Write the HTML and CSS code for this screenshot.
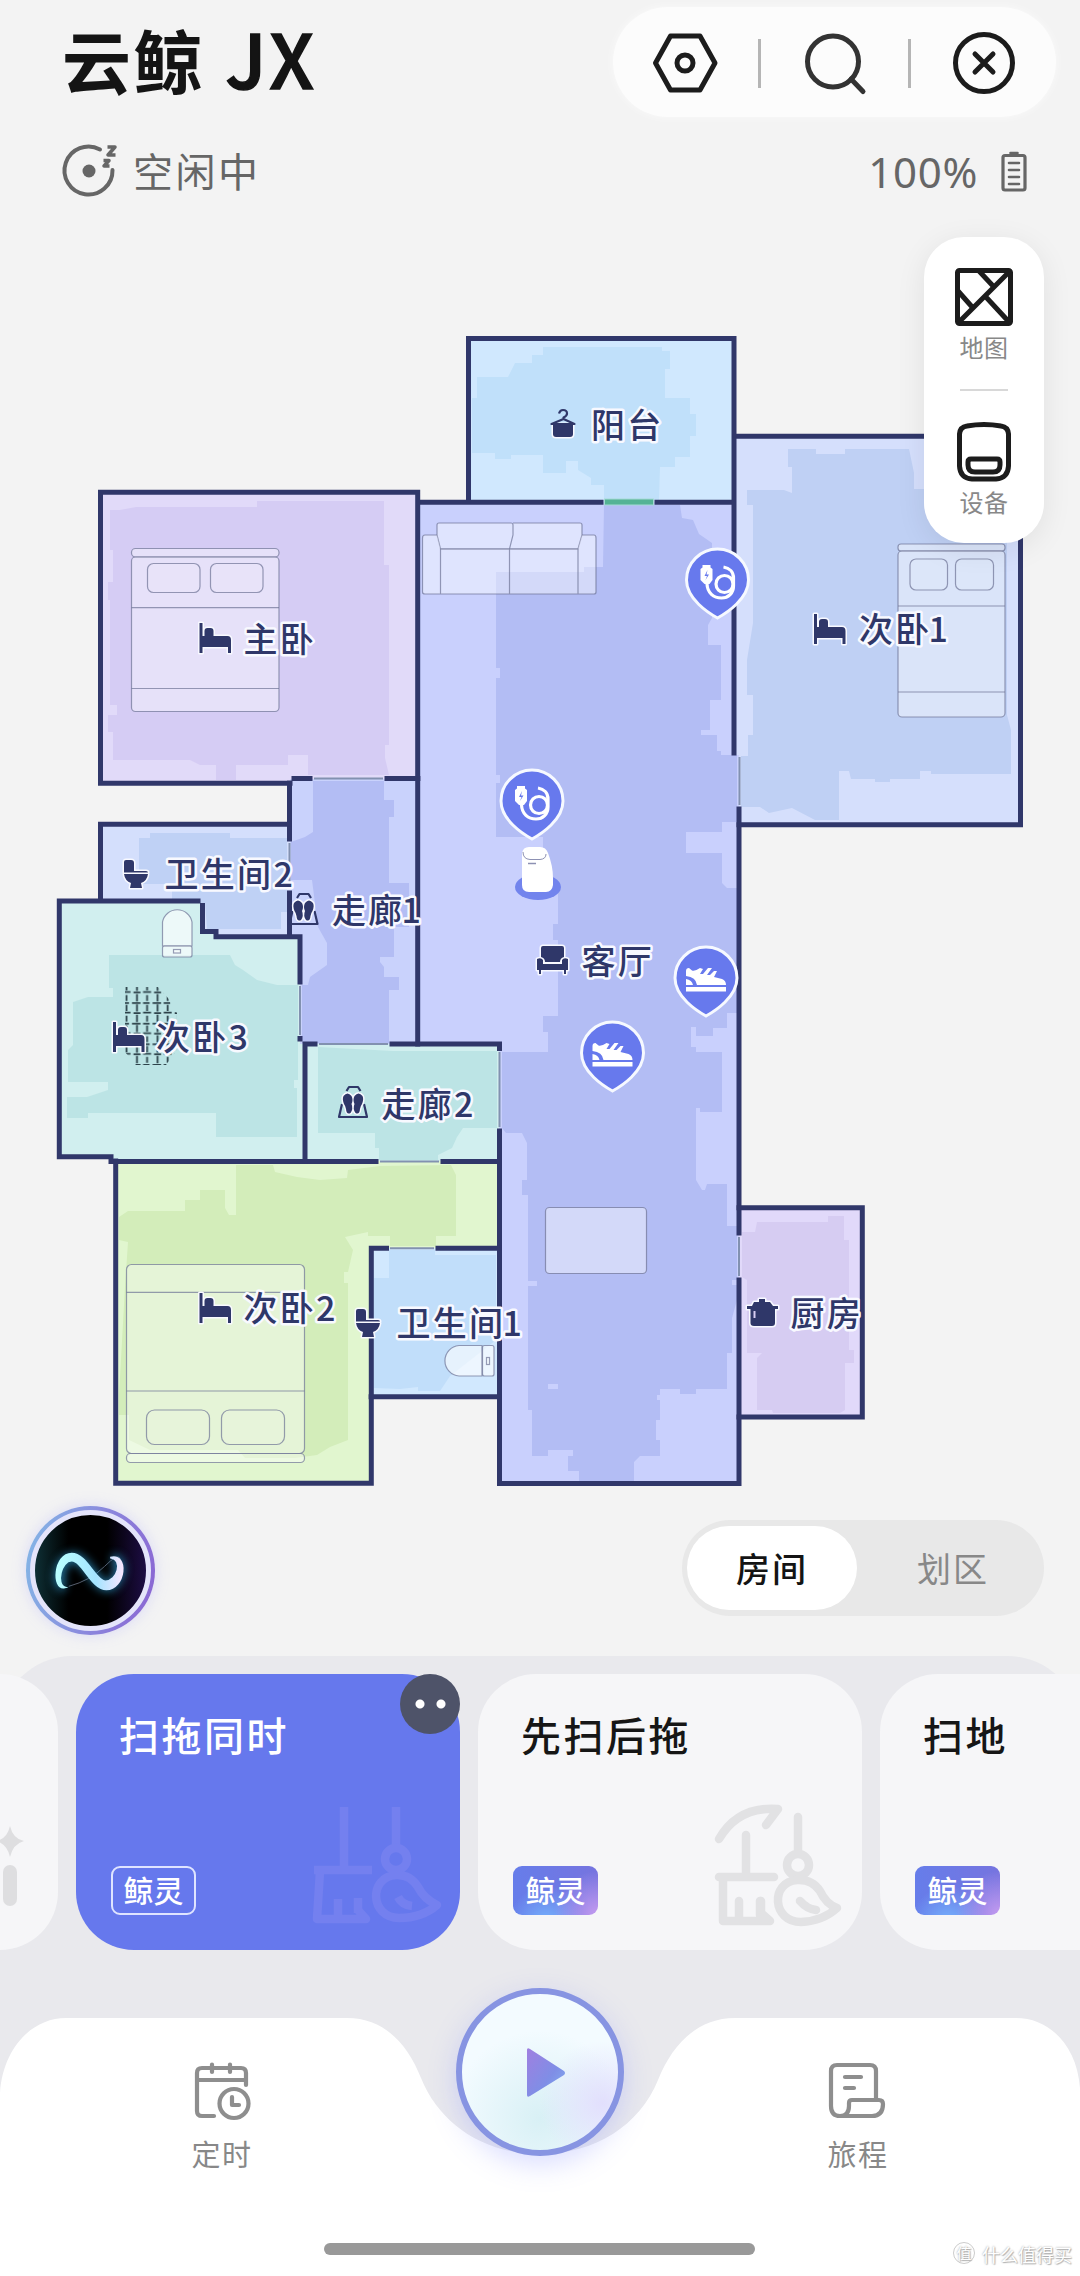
FILE: index.html
```html
<!DOCTYPE html>
<html lang="zh-CN">
<head>
<meta charset="utf-8" />
<meta name="viewport" content="width=1080" />
<title>云鲸 JX</title>
<link rel="stylesheet" href="styles.css">
</head>

<body>
<div class="page">
	<div class="header">
		<h1>云鲸 <span>JX</span></h1>
		<div class="tools">
			<svg class="tool" width="66" height="66" viewBox="0 0 66 66"><path d="M18.500 6H48L63 33L48 60H18.500L3.500 33Z"/><circle cx="33" cy="33" r="8"/></svg>
			<i></i>
			<svg class="tool search" width="66" height="66" viewBox="0 0 66 66"><circle cx="31" cy="31.500" r="25.500"/><path d="M49 49L61 61.500"/></svg>
			<i></i>
			<svg class="tool" width="66" height="66" viewBox="0 0 66 66"><circle cx="33" cy="33" r="28.500"/><path d="M24 24L42 42M42 24L24 42"/></svg>
		</div>
	</div>

	<div class="status">
		<svg width="60" height="60" viewBox="0 0 60 60"><path d="M39 12.500A24 24 0 1 0 51.500 33" fill="none" stroke="#666" stroke-width="4" stroke-linecap="round"/><circle cx="28" cy="34" r="6.500" fill="#666"/><path d="M46.500 10H54L47 18H54.500M42.500 23.500H48L43 29H48.500" fill="none" stroke="#666" stroke-width="3.500" stroke-linejoin="round"/></svg>
		<span class="state">空闲中</span>
		<span class="percent">100%</span>
		<svg width="26" height="42" viewBox="0 0 26 42"><rect x="2" y="4.500" width="22" height="34.500" rx="2" fill="none" stroke="#666" stroke-width="3.200"/><path d="M9.500 2H16.500M8 12H18M8 19H18M8 26H18M8 33H18" stroke="#666" stroke-width="2.600" stroke-linecap="round"/></svg>
	</div>

	<div class="stage">
	<svg class="map" width="1080" height="1270" viewBox="0 230 1080 1270">
		<defs>
			<path id="bed" d="M0 0H3V13H5V8Q5 5 8 5H11Q14 5 14 8V13H28Q31.500 13 31.500 17V30H28.500V24H3V30H0Z"/>
			<path id="toilet" d="M2 0H7Q10 0 10 3V11H22Q24 11 24 12.500H0V2Q0 0 2 0ZM0 14H24Q23 21 17 23L18 28H6L7 23Q1 21 0 14Z"/>
			<g id="feet">
				<path class="line" d="M9 5L11.500 1H20.500L23 5M4.500 18L1.500 31H29.500L26.500 18"/>
				<path d="M6 9Q10 4 14 9Q16 13 14 17Q16 22 13 26Q9 28 8.500 22Q8 19 6.500 17Q4.500 12 6 9ZM25 9Q21 4 17 9Q15 13 17 17Q15 22 18 26Q22 28 22.500 22Q23 19 24.500 17Q26.500 12 25 9Z" transform="translate(0 1)"/>
			</g>
			<g id="pin">
				<path d="M0 37C-9 32 -31 18 -31 -1A31 31 0 0 1 31 -1C31 18 9 32 0 37Z" fill="#6779ed" stroke="#f6f9ff" stroke-width="3"/>
			</g>
			<g id="cable">
				<use href="#pin"/>
				<path d="M-15 -16H-7V-13.500L-5 -12V-1L-8 3H-13L-17 -1V-12L-15 -13.500Z" fill="#fff"/>
				<path d="M-10 -11L-13 -5H-10.500L-12 -1L-8.500 -6.500H-11Z" fill="#6779ed"/>
				<path d="M-10.500 3C-10 12 -4 17 4 17C11 17 16 12 16 5V-3C16 -9 12 -13 6 -14" fill="none" stroke="#fff" stroke-width="3.200"/>
				<circle cx="7" cy="3" r="8.500" fill="none" stroke="#fff" stroke-width="3.200"/>
			</g>
			<g id="shoe">
				<use href="#pin"/>
				<path d="M-20 -8Q-20 -11 -17 -11L-14 -8.500Q-11 -7.500 -6 -11L-3 -10L-6 -5H-3L2 -11H6L1 -4H4L8 -8H11L8 -2L16 0Q20 1.500 20 6H-9Q-10 -2 -20 -3ZM-20 0Q-14 1 -13 6H-20Z" fill="#fff"/>
				<rect x="-20" y="8" width="40" height="4.500" fill="#fff"/>
			</g>
			<pattern id="rug" width="20.600" height="20.600" patternUnits="userSpaceOnUse" x="121" y="986.500">
				<path d="M1.500 5.500H9.500M12.500 6H19.500M1.500 16.500H8M11 16.500H19.500M5.500 8.500V14.500M5.500 18.500V20.600M5.500 0V4M16 7.500V15M16 0V4.500M16 18V20.600" stroke="#2c4149" stroke-width="1.800" fill="none"/>
			</pattern>
		</defs>

		<!-- 房间底色 -->
		<path fill="#d0e8fe" d="M468 338H734V502H468Z"/>
		<path fill="#c9d0fd" d="M418 502H734V755H739V1483H499V1044H418Z"/>
		<path fill="#e1daf9" d="M100 492H418V779H290V783H100Z"/>
		<path fill="#d5dffc" d="M734 436H1020V825H739V755H734Z"/>
		<path fill="#d4dffc" d="M100 824H290V937H216L202 931V901H100Z"/>
		<path fill="#c9d2fc" d="M290 779H418V1044H300V937H290Z"/>
		<path fill="#d1efef" d="M59 901H202V932H216V937H300V1044H305V1161H113V1157H59Z"/>
		<path fill="#d1efef" d="M305 1044H499V1161H305Z"/>
		<path fill="#e1f6cf" d="M116 1161H499V1248H371V1483H116Z"/>
		<path fill="#d1e8fe" d="M371 1248H499V1397H371Z"/>
		<path fill="#e1d9fa" d="M739 1208H862V1417H739Z"/>

		<!-- 已清扫区域 -->
		<path fill="#c0e0fa" d="M543 347H662V351H670V369H665V398H690V414H696V436H690V457H675V467H660L659 500H604V485H591V478L578 470V461H566V473H543V455H511V459H495V453H472V398H477V377H508L515 363H532V355H543Z"/>
		<path fill="#b3bdf4" d="M604 505H680L682 518L693 520L699 534L712 543V618L708 625V645H721V700H710V730H701V735H717V751H721V755H737V822H722V832H686V853H722V883L727 888H737V1013H727V1028H713V1036H696V1027H691V1047H696V1052H722V1112H700V1108H696V1180L702 1190H705L707 1184H727V1226H737V1280H732V1285H737V1300L732 1318V1353H727V1389H696V1394H680V1389H660V1395H657V1400H660V1420H656V1440H660V1456H640L634 1462V1481H579V1471H568V1456H532V1410H528V1195H522V1180H527V1143L522 1133H506L502 1128V1052H548V1032H543V1016H558V940H553V924H558V890L543 880V837H496V572H584V567H603Z"/>
		<path fill="#c9d0fd" d="M528 1281h9v5h-9zM548 1384h10v5h-10zM548 1450h25v6h-25zM496 775h4v8h-4zM496 668h4v10h-4z"/>
		<path fill="#d5ccf4" d="M110 510H120L136 507H257V501H384V565H389V745H385V758L389 775H308V755H288V765H236V780H216V765H200L190 760H113V732H108V715H117V705H110V600H108V582H113V550H110Z"/>
		<path fill="#bfd0f4" d="M788 449H816V454H845V449H909L914 473V489H1007V715L1011 730V774H931V771H920V779H890V782H875V779H851L849 771H839V820H815L792 808L769 813L760 807H741V756H748V735H753V695H747V660L753 623V505H747V490H784L792 493V467H788Z"/>
		<path fill="#bfd1f5" d="M150 833H230V838H287V912H281V929H207L205 903H172V884H139V838H150Z"/>
		<path fill="#b3bdf4" d="M313 781H384V800H394V817H389V883H409V927H394V957H380V962L384 967V977H399V990H389V1043H302V985H308L310 977L327 965V943L318 927L312 880H291V842L305 837L313 832Z"/>
		<path fill="#bce4e5" d="M109 955H230L235 965L243 970L257 980L277 985H298V1080H294V1088H297V1137H216V1113H193L88 1113V1118H67V1097H87L108 1090V1082H68V1050L73 1045V1002L88 997H113V988H109Z"/>
		<path fill="#bce4e5" d="M318 1047L393 1051H497V1128H463L457 1137L452 1148L438 1155V1160H379V1148H375V1133H318Z"/>
		<path fill="#d3edba" d="M236 1165H273L275 1172L297 1177L320 1180L347 1178L348 1170L380 1166L451 1165L456 1175V1236H436V1246H390V1236H368V1232L345 1237L353 1250L348 1272H344V1283H348V1440L330 1447L317 1455L295 1458H245L238 1450H150L129 1440V1415H119V1395L125 1287L128 1242L119 1240V1217L128 1211H185V1200H200V1190H225V1208L229 1215H236Z"/>
		<path fill="#c1defa" d="M389 1250H435V1255H496V1340L450 1376L440 1391H418V1387L400 1389L374 1388V1278H389Z"/>
		<path fill="#d6ccf2" d="M757 1222H828V1216H844V1240H849V1350H854V1363H845V1410L840 1413H773L772 1410H757V1358L762 1353H747V1280L742 1277V1232H755Z"/>

		<!-- 家具 -->
		<g class="furniture">
			<rect x="131.500" y="548.500" width="147.500" height="8.500" rx="4"/><rect x="131.500" y="557" width="147.500" height="154.500" rx="4"/><path class="thin" d="M131.500 607.700H279M131.500 688.500H279"/>
			<rect class="thin" x="147.500" y="563.500" width="52.500" height="29" rx="6"/><rect class="thin" x="210.500" y="563.500" width="52.500" height="29" rx="6"/>
			<rect x="898" y="544" width="107" height="7" rx="3"/><rect x="898" y="551" width="107" height="166" rx="4"/><path class="thin" d="M898 606H1005M898 692H1005"/>
			<rect class="thin" x="910" y="559" width="37.500" height="31" rx="6"/><rect class="thin" x="955.500" y="559" width="38" height="31" rx="6"/>
			<rect x="126.500" y="1264.500" width="178" height="189" rx="5"/><rect x="126.500" y="1453.500" width="178" height="9" rx="4"/><path class="thin" d="M126.500 1292.300H304.500M126.500 1391H304.500"/>
			<rect class="thin" x="146.500" y="1410" width="63" height="34.500" rx="8"/><rect class="thin" x="221.500" y="1410" width="63" height="34.500" rx="8"/>
			<path d="M439 523H511Q513 523 513 525V535L509.500 549H440.500L437 535V525Q437 523 439 523ZM513 523H580Q582 523 582 525V535L578 549H509.500"/>
			<path d="M440.500 549V594H425Q422.500 594 422.500 592V538Q422.500 535 425 535H437M440.500 549H509.500V594H440.500ZM509.500 549H578V594H509.500M578 549V594H594Q596 594 596 592V538Q596 535 594 535H582"/>
			<rect x="545.500" y="1207.500" width="101" height="66" rx="4"/>
			<path class="solid" d="M162.500 946V922A15 15 0 0 1 192 922V946Z"/><rect x="162.500" y="946" width="29.500" height="11" rx="2" class="solid"/><rect x="173.500" y="949.500" width="7" height="3.500"/>
			<path class="solid" d="M482 1345.500H459A15.300 15.300 0 0 0 459 1376H482Z"/><rect x="482.500" y="1345.500" width="11.500" height="30.500" rx="2" class="solid"/><rect x="486.500" y="1357.500" width="3" height="7"/>
		</g>
		<path d="M125 987H158L168 998L177 1013V1050L166 1065H136L125 1052Z" fill="url(#rug)"/>

		<!-- 墙体 -->
		<g class="wall">
			<path d="M468.500 502V338.500H734V753M420 502.300H601M657 502.300H734M734 436.300H1020.500V824.700H739"/>
			<path d="M290 783.300H100.500V492.300H417.700V1044M294 778.500H310M387 778.500H418M289.500 783V839M289.500 893V934"/>
			<path d="M100.500 901V824.300H289.500M198 901H59.300V1156.700H111M111 1161.500H376M443 1161.500H499M202.500 905.500V931.500H216V936.700H300V982M300 1038.500V1039"/>
			<path d="M305 1161V1044H315M392 1044H499.500V1048.500M499.500 1131V1483.500H739V1280M739 1233V809"/>
			<path d="M115.700 1161V1483.300H371.300V1248.300H386.500M438 1248.300H499M371 1396.700H499M739 1207.700H862.300V1417H739"/>
		</g>
		<path class="door" d="M739.500 757V805M314 778.500H383M289.500 843V889M300 986V1035M319 1044H388M499.500 1052V1127M380 1161.500H439M390 1248.300H434M739 1237V1276"/>
		<rect x="604.500" y="499" width="49" height="6" fill="#54b395" stroke="#a5d9d5"/>

		<!-- 房间名称 -->
		<g class="label">
			<text x="591" y="438">阳台</text>
			<text x="243.500" y="651.500">主卧</text>
			<text x="859" y="642">次卧<tspan dx="-3">1</tspan></text>
			<text x="164.500" y="887">卫生间2</text>
			<text x="332" y="922.500">走廊<tspan dx="-3">1</tspan></text>
			<text x="156" y="1050">次卧3</text>
			<text x="381.500" y="1117">走廊2</text>
			<text x="243.500" y="1321">次卧2</text>
			<text x="396.500" y="1336">卫生间<tspan dx="-3">1</tspan></text>
			<text x="581.500" y="974">客厅</text>
			<text x="790.500" y="1326">厨房</text>
			<use href="#bed" x="199.500" y="623"/>
			<use href="#bed" x="814" y="614"/>
			<use href="#bed" x="199.500" y="1293"/>
			<use href="#bed" x="113" y="1022"/>
			<use href="#toilet" x="124" y="860"/>
			<use href="#toilet" x="356" y="1309"/>
			<use href="#feet" x="288" y="893"/>
			<use href="#feet" x="337.500" y="1086"/>
			<path d="M553 424H573V434Q573 437 570 437H556Q553 437 553 434Z"/>
			<path class="line" d="M559 413.500Q560 410 563 410Q567 410 567 413.500Q567 416 563.500 417.500V419L551.500 424H574.500L563.500 419"/>
			<path d="M543 946H562Q564 946 564 948V957Q560 958 560 962H545Q545 958 541 957V948Q541 946 543 946ZM537 959Q541 957 543 960V964H562V960Q564 957 568 959V970H566V974H564V970H541V974H539V970H537Z"/>
			<path d="M747 1306H752L754 1302H759V1299H765V1302H770L773 1306H778V1309H775V1323Q775 1326 772 1326H754Q750.500 1326 750.500 1323V1309H747Z"/><path d="M754.500 1311V1318" class="gleam"/>
		</g>

		<!-- 基站 -->
		<ellipse cx="538" cy="887" rx="23" ry="13" fill="#7284ed"/>
		<path d="M522 853Q523 847 529 847H540Q546 847 548 853Q553 866 553 878V885Q552 892 546 892H529Q522 892 522 885Z" fill="#fff"/>
		<path d="M523 852Q523 859 530 859.500H540Q546 859 546 854" fill="none" stroke="#8d91b3" stroke-width="1"/>
		<path d="M528 863.500H536" stroke="#8d91b3" stroke-width="1.500"/>
		<use href="#cable" x="717.500" y="581"/>
		<use href="#cable" x="532" y="802"/>
		<use href="#shoe" x="706" y="979"/>
		<use href="#shoe" x="612.500" y="1054"/>
	</svg>

	<div class="side">
		<svg width="60" height="60" viewBox="0 0 60 60"><rect x="3.500" y="3.500" width="53" height="53" rx="2"/><path d="M56 4L4 56M4 24L19 41M25 4L40 20M31 29L56 56"/></svg>
		<span>地图</span>
		<hr />
		<svg width="60" height="60" viewBox="0 0 60 60"><path d="M13 4Q30 1 47 4Q54 5 54.500 12V44Q54 56 42 57H18Q6 56 5.500 44V12Q6 5 13 4Z"/><path d="M17 37H43Q46 37 46 40V43Q46 50 39 50H21Q14 50 14 43V40Q14 37 17 37Z"/></svg>
		<span>设备</span>
	</div>
	</div>

	<div class="controls">
		<div class="ai">
			<svg width="112" height="112" viewBox="0 0 112 112">
				<defs><linearGradient id="wave" x1="0" x2="1"><stop offset="0" stop-color="#b9ffff"/><stop offset=".6" stop-color="#a5e4ff"/><stop offset="1" stop-color="#f5e6ff"/></linearGradient></defs>
				<path d="M34 72Q56 66 70 52T86 44" fill="none" stroke="#59606e" stroke-width="1"/>
				<path class="glow" d="M30 72C20 72 24 42 39 43C52 44 61 72 73 72C84 72 92 45 78 44"/>
				<path class="wave" d="M30 73C17 76 19 39 37 39C52 39 61 67 71 67C83 67 90 45 76 43C95 38 91 75 72 75C57 75 48 46 37 46C26 46 21 70 30 73Z"/>
			</svg>
		</div>
		<div class="switch">
			<span class="active">房间</span>
			<span>划区</span>
		</div>
	</div>

	<div class="bottom">
		<div class="cards">
			<div class="card">
				<svg class="sparkle" width="40" height="80" viewBox="0 0 40 80"><path d="M24 0Q27 13 38 15Q27 18 24 31Q21 18 10 15Q21 13 24 0Z"/><rect x="17" y="39" width="14" height="41" rx="7"/></svg>
			</div>
			<div class="card active">
				<b>扫拖同时</b>
				<em>鲸灵</em>
				<span class="more"></span>
				<svg class="pic" width="134" height="118" viewBox="0 0 134 118"><path d="M36 0V60M88 0V38M6 63H64M12 64L9 112H58L50 103V91M30 112V92M50 92V106"/><circle cx="88" cy="52" r="11"/><path d="M88 68C60 70 62 111 91 111Q114 111 129 98Q116 92 110 80Q102 67 88 68ZM90 90Q94 98 104 99"/></svg>
			</div>
			<div class="card">
				<b>先扫后拖</b>
				<em>鲸灵</em>
				<svg class="pic" width="134" height="122" viewBox="0 0 134 122"><path d="M9 36Q28 3 68 6L56 22M36 32V72M9 74H64M13 75V118H60L51 110V98M29 116V98M50 98V112M88 14V48"/><circle cx="88" cy="62" r="11"/><path d="M87 77C60 79 62 119 91 119Q113 118 127 105Q116 101 110 88Q102 76 87 77ZM90 98Q97 106 106 107"/></svg>
			</div>
			<div class="card">
				<b>扫地</b>
				<em>鲸灵</em>
			</div>
		</div>

		<div class="nav">
			<svg class="navbg" width="1080" height="258" viewBox="0 0 1080 258"><path d="M0 258V75C3 30 32 0 66 0H347C385 0 408 27 421 60C440 107 485 136 540 136C595 136 640 107 658 62C672 27 697 0 735 0H1016C1050 0 1077 28 1080 70V258Z" fill="#fff"/></svg>
			<div class="item">
				<svg width="60" height="60" viewBox="0 0 60 60"><path d="M54 24V12Q54 7 49 7H10Q5 7 5 12V50Q5 55 10 55H22M5 19H54M20 3.500V11M38 3.500V11"/><circle cx="42" cy="42.500" r="14.500"/><path d="M40 36V44H47"/></svg>
				<span>定时</span>
			</div>
			<div class="play">
				<svg width="50" height="58" viewBox="0 0 50 58"><defs><linearGradient id="tri" x1="0" y1="0" x2="1" y2="1"><stop offset="0" stop-color="#a07fe0"/><stop offset=".6" stop-color="#7f8ee6"/><stop offset="1" stop-color="#84b0f0"/></linearGradient></defs><path d="M6 6Q6 3 9 5L43 27Q45 29 43 31L9 52Q6 54 6 51Z" fill="url(#tri)"/></svg>
			</div>
			<div class="item">
				<svg width="60" height="60" viewBox="0 0 60 60"><path d="M48 38V10Q48 4 42 4H9Q3 4 3 10V45Q3 55 12 55Q21 55 21 45V42Q21 39 24 39H51Q55 39 55 43Q55 55 44 55H12M17 16H33M17 27H26"/></svg>
				<span>旅程</span>
			</div>
			<div class="homebar"></div>
			<div class="watermark"><i>值</i>什么值得买</div>
		</div>
	</div>
</div>
</body>
</html>
```

FILE: styles.css
```css
*{ margin:0; padding:0; box-sizing:border-box;}
body{ background:#f3f3f3; font-family:"Noto Sans CJK SC",sans-serif; color:#161616;}
.page{ width:1080px; height:2276px; overflow:hidden; position:relative;}
svg{ display:block; overflow:visible;}
i,em{ font-style:normal;}

.header{ height:124px; padding:7px 24px 0 62px; display:flex; justify-content:space-between;}
.header h1{ font-size:69px; font-weight:700; line-height:104px; height:104px; letter-spacing:2.5px; color:#141414;}
.header h1 span{ font-size:75px; font-weight:500; -webkit-text-stroke:1.500px #141414; letter-spacing:3px; margin-left:2px; line-height:1;}
.tools{ width:443px; height:110px; border-radius:55px; background:#fcfcfc; display:flex; align-items:center; justify-content:space-between; padding:2px 39px 0; box-shadow:0 0 10px rgba(255,255,255,.6);}
.tools i{ width:3px; height:49px; background:#b5b5b5;}
.tool{ fill:none; stroke:#1c1c1c; stroke-width:5; stroke-linecap:round; stroke-linejoin:round;}
.search{ stroke:#333;}

.status{ height:106px; padding:13px 53px 0 61px; display:flex; align-items:flex-start; color:#666;}
.status span{ line-height:66px; font-size:40px; font-weight:400;}
.state{ margin-left:12px; letter-spacing:2.5px; flex:1;}
.status .percent{ line-height:70px; font-size:42px; margin-right:23px; font-family:"Noto Sans",sans-serif; font-weight:400; letter-spacing:.7px;}
.status svg:last-child{ margin-top:14px;}

.stage{ height:1270px; position:relative;}
.wall{ fill:none; stroke:#30376a; stroke-width:5; stroke-linecap:square;}
.door{ fill:none; stroke:#8291b0; stroke-width:2;}
.furniture{ fill:#fff; fill-opacity:.42; stroke:#6e7396; stroke-opacity:.7; stroke-width:1.2;}
.furniture .thin{ fill-opacity:.08;}
.furniture .solid{ fill-opacity:.6;}
.label{ font-size:34px; font-weight:500; letter-spacing:2.3px; fill:#2f3769; stroke:#f8f9ff; stroke-width:5; stroke-linejoin:round; paint-order:stroke;}
.label use,.label path{ stroke-width:3;}
.line,.label .line{ fill:none; stroke:#2f3769; stroke-width:2.2;}
.label .gleam{ stroke:#d6ccf2; stroke-width:2;}

.side{ position:absolute; right:36px; top:7px; width:120px; height:306px; border-radius:40px; background:#fff; box-shadow:0 6px 30px rgba(0,0,0,.08); display:flex; flex-direction:column; align-items:center; padding-top:30px;}
.side svg{ fill:none; stroke:#1c1c1c; stroke-width:5; stroke-linejoin:round;}
.side span{ font-size:24px; line-height:36px; margin-top:2px; color:#888; letter-spacing:.5px;}
.side hr{ width:48px; height:2px; border:0; background:#d8d8d8; margin:24px 0 31px;}

.controls{ height:156px; display:flex; justify-content:space-between; padding:6px 36px 0 26px;}
.ai{ width:129px; height:129px; border-radius:50%; padding:4px; background:linear-gradient(100deg,#83b8e6,#8b87dd 55%,#8a63d2); box-shadow:0 0 14px rgba(170,170,255,.35);}
.ai svg{ width:121px; height:121px; border-radius:50%; border:5px solid #e4e4fa; overflow:hidden; background:linear-gradient(90deg,#0e2f35,#000 30%,#000 65%,#1d0d44);}
.wave{ fill:url(#wave); stroke:url(#wave); stroke-width:2;}
.glow{ fill:none; stroke:#2b93c6; stroke-width:10; filter:blur(5px); opacity:.8;}
.switch{ width:362px; height:96px; margin-top:14px; border-radius:48px; background:#e8e8e8; padding:6px 5px; display:flex;}
.switch span{ width:170px; flex:none; height:84px; line-height:84px; border-radius:42px; text-align:center; font-size:34px; letter-spacing:2px; color:#888;}
.switch span + span{ width:182px; margin-left:5px;}
.switch .active{ background:#fff; color:#141414; font-weight:500;}

.bottom{ height:620px; background:#e9e9ed; border-radius:72px 72px 0 0; padding-top:18px;}
.cards{ display:flex; gap:18px; margin-left:-326px; width:1600px;}
.card{ width:384px; height:276px; flex:none; border-radius:58px; background:#f6f6f8; position:relative; padding:30px 35px 35px; display:flex; flex-direction:column; justify-content:space-between; align-items:flex-start;}
.card b{ font-size:40px; font-weight:500; line-height:60px; letter-spacing:2.5px; margin-left:8px;}
.card em{ width:85px; height:49px; border-radius:9px; font-size:30px; font-weight:500; line-height:47px; text-align:center; color:#fff; background:radial-gradient(circle at 100% 100%,#c59bf0,transparent 45%),radial-gradient(circle at 40% 120%,#74b6ff,transparent 50%),linear-gradient(90deg,#667dea,#7674df);}
.card.active{ background:#6678ed; color:#fff;}
.card.active em{ background:none; border:2px solid #dfe4ff; line-height:43px;}
.more{ position:absolute; right:0; top:0; width:60px; height:60px; border-radius:50%; background:radial-gradient(circle at 20px 30px,#fff 4px,transparent 5px),radial-gradient(circle at 41px 30px,#fff 4px,transparent 5px),#4e5369;}
.pic{ position:absolute; right:18px; bottom:25px; fill:none; stroke:#e2e2e4; stroke-width:8.5; stroke-linecap:round; stroke-linejoin:round;}
.active .pic{ stroke:#7480ef; stroke-linecap:butt;}
.sparkle{ position:absolute; right:32px; bottom:44px; fill:#dedee0;}

.nav{ height:258px; margin-top:68px; position:relative; display:flex; justify-content:space-between; padding:43px 162px 0;}
.navbg{ position:absolute; left:0; top:0;}
.item{ width:120px; position:relative; display:flex; flex-direction:column; align-items:center;}
.item svg{ fill:none; stroke:#8e8e8e; stroke-width:4.2; stroke-linecap:round; stroke-linejoin:round;}
.item span{ margin-top:11px; font-size:29px; line-height:42px; color:#888; letter-spacing:1.5px; font-weight:400;}
.play{ position:relative; width:168px; height:168px; margin-top:-73px; border-radius:50%; border:6px solid #8794e2; background:radial-gradient(circle at 90% 70%,#e2dffd,transparent 35%),radial-gradient(circle at 50% 80%,#d8f0f5,transparent 60%),#f3fbff; box-shadow:0 8px 28px rgba(130,140,255,.3); display:flex; align-items:center; justify-content:center; padding:2px 0 0 12px;}
.homebar{ position:absolute; left:324px; top:225px; width:431px; height:12px; border-radius:6px; background:#999;}
.watermark{ position:absolute; right:8px; top:224px; font-size:18px; line-height:24px; color:#fff; text-shadow:0 0 2px #999,1px 1px 1px #bbb; display:flex; gap:7px;}
.watermark i{ width:22px; height:22px; border-radius:50%; border:1px solid #ccc; font-size:15px; line-height:20px; text-align:center;}
```
